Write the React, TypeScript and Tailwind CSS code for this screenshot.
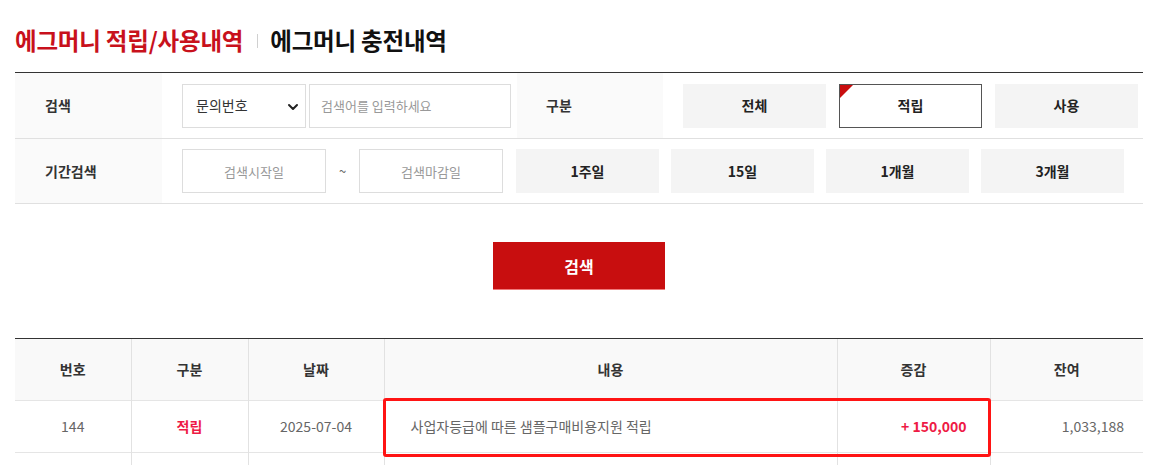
import React, { useState } from 'react';

const FONT = { fontFamily: '"Noto Sans CJK KR", "Noto Sans", sans-serif' };

const TYPES = ['전체', '적립', '사용'];
const PERIODS = ['1주일', '15일', '1개월', '3개월'];

export default function App() {
  const [type, setType] = useState('적립');
  const [period, setPeriod] = useState<string | null>(null);

  return (
    <div style={FONT} className="bg-white w-[1151px] min-h-[465px] text-[#333]">
      <div className="ml-[15px] w-[1128px]">
        {/* Tabs */}
        <div className="h-[72px] pt-[24px] flex items-start">
          <h2 className="text-[23.5px] leading-[32px] font-bold text-[#c8111c] tracking-[-0.2px]">에그머니 적립/사용내역</h2>
          <span className="w-px h-[14px] bg-[#d0d0d0] mt-[10px] ml-[14px] mr-[12px]" />
          <h2 className="text-[23.5px] leading-[32px] font-bold text-[#111] tracking-[-0.2px]">에그머니 충전내역</h2>
        </div>

        {/* Search form */}
        <div className="border-t border-[#333]">
          <div className="flex h-[66px] border-b border-[#e0e0e0]">
            <div className="w-[147px] bg-[#fafafa] flex items-center pl-[30px] text-[14px] font-bold">검색</div>
            <div className="flex items-center pl-[20px] gap-[3px]">
              <div className="relative w-[124px] h-[44px] border border-[#ddd] bg-white flex items-center pl-[13px] text-[14px] text-[#333]">
                문의번호
                <svg className="absolute right-[6px] top-[16px]" width="12" height="12" viewBox="0 0 12 12">
                  <path d="M2 4l4 4 4-4" fill="none" stroke="#222" strokeWidth="2" strokeLinecap="round" strokeLinejoin="round" />
                </svg>
              </div>
              <input
                className="w-[202px] h-[44px] border border-[#ddd] px-[11px] text-[13px] outline-none placeholder:text-[#999]"
                placeholder="검색어를 입력하세요"
              />
            </div>
            <div className="ml-[6px] w-[146px] bg-[#fafafa] flex items-center pl-[29px] text-[14px] font-bold">구분</div>
            <div className="flex items-center pl-[20px] gap-[13px]">
              {TYPES.map((t) => (
                <button
                  key={t}
                  onClick={() => setType(t)}
                  className={`relative w-[143px] h-[44px] text-[14px] font-bold text-[#222] ${type === t ? 'bg-white border border-[#555]' : 'bg-[#f4f4f4]'}`}
                >
                  {type === t && (
                    <span className="absolute left-0 top-0 w-0 h-0 border-t-[13px] border-r-[13px] border-t-[#c90e0f] border-r-transparent" />
                  )}
                  {t}
                </button>
              ))}
            </div>
          </div>
          <div className="flex h-[65px] border-b border-[#e0e0e0]">
            <div className="w-[147px] bg-[#fafafa] flex items-center pl-[30px] text-[14px] font-bold">기간검색</div>
            <div className="flex items-center pl-[20px]">
              <input
                className="w-[144px] h-[44px] border border-[#ddd] text-center text-[13px] outline-none placeholder:text-[#999]"
                placeholder="검색시작일"
              />
              <span className="w-[33px] text-center text-[13px] text-[#666]">~</span>
              <input
                className="w-[144px] h-[44px] border border-[#ddd] text-center text-[13px] outline-none placeholder:text-[#999]"
                placeholder="검색마감일"
              />
              <div className="flex ml-[13px] gap-[12px]">
                {PERIODS.map((p) => (
                  <button
                    key={p}
                    onClick={() => setPeriod(p)}
                    className={`w-[143px] h-[44px] text-[14px] font-bold text-[#222] ${period === p ? 'bg-white border border-[#555]' : 'bg-[#f4f4f4]'}`}
                  >
                    {p}
                  </button>
                ))}
              </div>
            </div>
          </div>
        </div>

        <div className="flex justify-center mt-[38px]">
          <button className="w-[172px] h-[48px] bg-[#c80e0f] border-b border-[#f07a7a] text-white text-[16px] font-bold">검색</button>
        </div>

        {/* Result table */}
        <div className="relative mt-[48px] border-t border-[#333]">
          <table className="w-full table-fixed border-collapse text-[14px]">
            <colgroup>
              <col className="w-[116px]" />
              <col className="w-[117px]" />
              <col className="w-[136px]" />
              <col className="w-[453px]" />
              <col className="w-[153px]" />
              <col className="w-[153px]" />
            </colgroup>
            <thead>
              <tr className="h-[61px] bg-[#f9f9f9] border-b border-[#e5e5e5]">
                {['번호', '구분', '날짜', '내용', '증감', '잔여'].map((h, i) => (
                  <th key={h} className={`font-bold text-[#333] ${i > 0 ? 'border-l border-[#e2e2e2]' : ''}`}>{h}</th>
                ))}
              </tr>
            </thead>
            <tbody>
              <tr className="h-[52px] border-b border-[#e5e5e5] text-[#666]">
                <td className="text-center">144</td>
                <td className="text-center border-l border-[#e2e2e2] font-bold text-[#ee1a45]">적립</td>
                <td className="text-center border-l border-[#e2e2e2]">2025-07-04</td>
                <td className="border-l border-[#e2e2e2] pl-[26px]">사업자등급에 따른 샘플구매비용지원 적립</td>
                <td className="border-l border-[#e2e2e2] text-right pr-[23px] font-bold text-[#ee1a45]">+ 150,000</td>
                <td className="border-l border-[#e2e2e2] text-right pr-[19px]">1,033,188</td>
              </tr>
              <tr className="h-[52px] border-b border-[#e5e5e5]">
                <td />
                <td className="border-l border-[#e2e2e2]" />
                <td className="border-l border-[#e2e2e2]" />
                <td className="border-l border-[#e2e2e2]" />
                <td className="border-l border-[#e2e2e2]" />
                <td className="border-l border-[#e2e2e2]" />
              </tr>
            </tbody>
          </table>
          {/* highlight annotation */}
          <div className="absolute left-[368px] top-[59px] w-[608px] h-[59px] border-[3px] border-[#ff1414] rounded-[3px] pointer-events-none" />
        </div>
      </div>
    </div>
  );
}
